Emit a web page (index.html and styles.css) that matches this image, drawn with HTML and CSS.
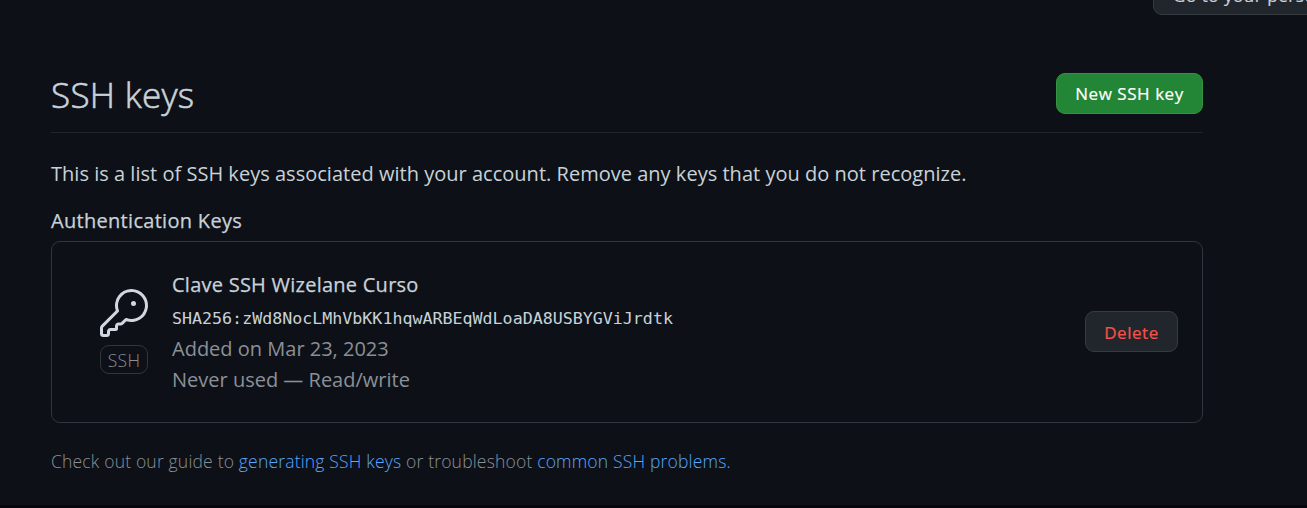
FILE: index.html
```html
<!DOCTYPE html>
<html lang="en">
<head>
<meta charset="utf-8">
<title>SSH keys</title>
<link rel="stylesheet" href="styles.css">
</head>
<body>
<div class="page">
  <div class="topbar"><button class="btn profile-link">Go to your personal profile</button></div>
  <main class="content">
    <header class="heading">
      <h1 class="title">SSH keys</h1>
      <button class="btn btn-primary">New SSH key</button>
    </header>
    <p class="intro">This is a list of SSH keys associated with your account. Remove any keys that you do not recognize.</p>
    <h2 class="subtitle">Authentication Keys</h2>
    <section class="key-card">
      <div class="key-type">
        <svg class="key-icon" viewBox="0 0 24 24" aria-hidden="true">
          <path d="M16.75 8.5a1.25 1.25 0 1 0 0-2.5 1.25 1.25 0 0 0 0 2.5Z"/>
          <path d="M15.75 0a8.25 8.25 0 1 1-2.541 16.101l-1.636 1.636a1.744 1.744 0 0 1-1.237.513H9.25a.25.25 0 0 0-.25.25v1.448a.876.876 0 0 1-.256.619l-.214.213a.75.75 0 0 1-.545.22H5.25a.25.25 0 0 0-.25.25v1A1.75 1.75 0 0 1 3.25 24h-1.5A1.75 1.75 0 0 1 0 22.25v-2.836c0-.464.185-.908.513-1.236l7.386-7.388A8.249 8.249 0 0 1 15.75 0ZM9 8.25a6.733 6.733 0 0 0 .463 2.462.75.75 0 0 1-.168.804l-7.722 7.721a.25.25 0 0 0-.073.177v2.836c0 .138.112.25.25.25h1.5a.25.25 0 0 0 .25-.25v-1c0-.966.784-1.75 1.75-1.75H7.5v-1c0-.966.784-1.75 1.75-1.75h1.086a.25.25 0 0 0 .177-.073l1.971-1.972a.75.75 0 0 1 .804-.168A6.75 6.75 0 1 0 9 8.25Z"/>
        </svg>
        <span class="badge">SSH</span>
      </div>
      <div class="key-info">
        <strong class="key-name">Clave SSH Wizelane Curso</strong>
        <code class="fingerprint">SHA256:zWd8NocLMhVbKK1hqwARBEqWdLoaDA8USBYGViJrdtk</code>
        <span class="meta added">Added on Mar 23, 2023</span>
        <span class="meta used">Never used — Read/write</span>
      </div>
      <button class="btn btn-danger">Delete</button>
    </section>
    <p class="help">Check out our guide to <a class="link">generating SSH keys</a> or troubleshoot <a class="link">common SSH problems.</a></p>
  </main>
</div>
</body>
</html>
```

FILE: styles.css
```css
* { box-sizing: border-box; }
body {
  margin: 0;
  height: 508px;
  overflow: hidden;
  background: #0d1117;
  color: #c9d1d9;
  font: 400 20px/30px "Open Sans", "Noto Sans", sans-serif;
}
.page {
  height: 508px;
  overflow: hidden;
  border-bottom: 3px solid #08040c;
}
.topbar {
  display: flex;
  height: 15px;
  padding-left: 1153px;
  align-items: flex-end;
}
.btn {
  flex: none;
  height: 41px;
  padding: 0;
  border: 1px solid #363b42;
  border-radius: 9px;
  background: #21262d;
  color: #c9d1d9;
  font: 500 17px/37px "Open Sans", "Noto Sans", sans-serif;
  letter-spacing: 0.55px;
  -webkit-text-stroke: 0.2px currentColor;
  white-space: nowrap;
}
.profile-link { width: 270px; padding: 2px 0 0 19px; text-align: left; }
.content { width: 1152px; margin-left: 51px; }
.heading {
  display: flex;
  justify-content: space-between;
  align-items: flex-start;
  height: 118px;
  padding-top: 58px;
  border-bottom: 1px solid #21262d;
}
.title {
  margin: 0;
  font-size: 35px;
  font-weight: 300;
  line-height: 44px;
  letter-spacing: 0.3px;
  -webkit-text-stroke: 0.6px currentColor;
}
.btn-primary {
  width: 147px;
  border-color: #37933f;
  background: #238636;
  color: #fff;
}
.intro { margin: 26px 0 0; letter-spacing: 0.02px; white-space: nowrap; }
.subtitle {
  margin: 17px 0 0;
  font-size: 20px;
  font-weight: 500;
  letter-spacing: 0.3px;
  -webkit-text-stroke: 0.25px currentColor;
}
.key-card {
  display: flex;
  align-items: center;
  height: 182px;
  margin-top: 5px;
  padding: 0 24px 2px 48px;
  border: 1px solid #30363d;
  border-radius: 9px;
}
.key-type { display: flex; flex-direction: column; gap: 8px; width: 48px; }
.key-icon { display: block; width: 48px; height: 48px; fill: #d0d7de; }
.badge {
  height: 29px;
  border: 1px solid #30363d;
  border-radius: 9px;
  color: #8b9097;
  font-size: 17.5px;
  font-weight: 300;
  line-height: 28px;
  letter-spacing: 0.3px;
  text-align: center;
}
.key-info {
  display: flex;
  flex: 1;
  flex-direction: column;
  margin-left: 24px;
  padding-top: 2px;
  white-space: nowrap;
}
.key-name {
  font-weight: 500;
  line-height: 32px;
  letter-spacing: 0.25px;
  -webkit-text-stroke: 0.25px currentColor;
}
.fingerprint {
  height: 32px;
  padding-top: 3px;
  font: 400 16.65px/30px "DejaVu Sans Mono", monospace;
}
.meta { line-height: 31px; color: #8b9097; }
.btn-danger { width: 93px; padding-top: 2px; color: #f85149; }
.help {
  margin: 23px 0 0;
  color: #8b9097;
  font-size: 17.5px;
  font-weight: 300;
  letter-spacing: 0.18px;
  white-space: nowrap;
}
.link { color: #58a6ff; }
```
